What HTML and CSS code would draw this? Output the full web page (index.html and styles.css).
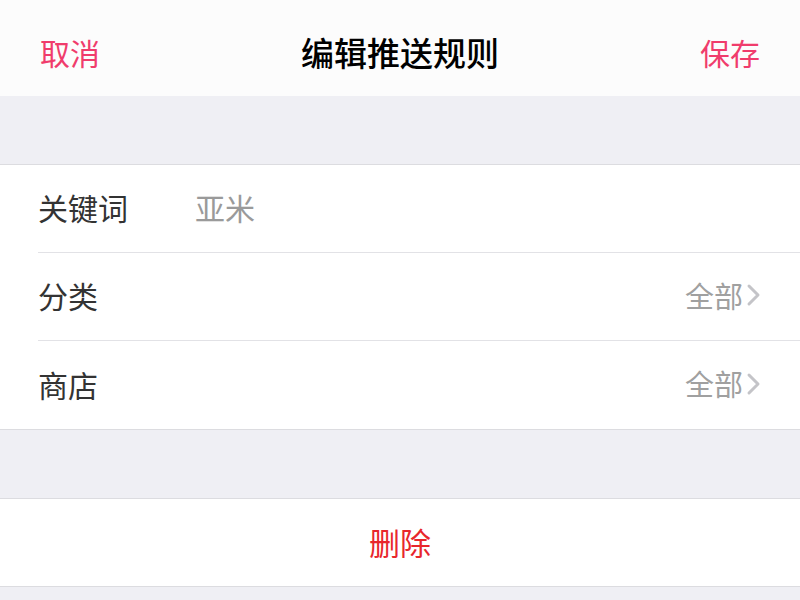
FILE: index.html
```html
<!DOCTYPE html>
<html>
<head>
  <meta charset="utf-8">
  <title>编辑推送规则</title>
  <link rel="stylesheet" href="styles.css">
</head>
<body>
  <div class="page">
    <div class="nav-bar">
      <span class="nav-btn">取消</span>
      <span class="nav-title">编辑推送规则</span>
      <span class="nav-btn">保存</span>
    </div>

    <div class="gap"></div>

    <div class="group">
      <div class="row">
        <span class="row-label">关键词</span>
        <span class="row-input">亚米</span>
      </div>
      <div class="row">
        <span class="row-label">分类</span>
        <span class="row-value">全部</span>
        <svg class="chevron" width="16" height="24" viewBox="0 0 16 24"><path d="M3 3 L12 12 L3 21" fill="none" stroke="#c4c4c8" stroke-width="3" stroke-linecap="round" stroke-linejoin="round"/></svg>
      </div>
      <div class="row">
        <span class="row-label">商店</span>
        <span class="row-value">全部</span>
        <svg class="chevron" width="16" height="24" viewBox="0 0 16 24"><path d="M3 3 L12 12 L3 21" fill="none" stroke="#c4c4c8" stroke-width="3" stroke-linecap="round" stroke-linejoin="round"/></svg>
      </div>
    </div>

    <div class="gap"></div>

    <div class="group">
      <div class="delete-row">删除</div>
    </div>
  </div>
</body>
</html>
```

FILE: styles.css
```css
body {
  margin: 0;
  padding: 0;
  font-family: "Noto Sans CJK SC", "Noto Sans", sans-serif;
  background-color: #efeff4;
}

.page {
  width: 800px;
  min-height: 600px;
}

.nav-bar {
  height: 96px;
  display: flex;
  align-items: center;
  justify-content: space-between;
  padding: 0 40px;
  background-color: #fcfcfc;
  box-sizing: border-box;
}

.nav-btn {
  font-size: 30px;
  color: #f03c6c;
  line-height: 1;
  padding-top: 8px;
}

.nav-title {
  font-size: 33px;
  font-weight: 500;
  color: #000;
  line-height: 1;
  padding-top: 8px;
}

.gap {
  height: 68px;
}

.group {
  background-color: #fff;
  border-top: 1px solid #dcdce0;
  border-bottom: 1px solid #dcdce0;
}

.row {
  height: 88px;
  box-sizing: border-box;
  margin-left: 38px;
  padding-right: 40px;
  padding-bottom: 3px;
  display: flex;
  align-items: center;
  border-bottom: 1px solid #e2e2e6;
}

.row:last-child {
  border-bottom: none;
}

.row-label {
  width: 157px;
  font-size: 30px;
  color: #333;
  line-height: 1;
}

.row-input {
  flex: 1;
  font-size: 30px;
  color: #9a9a9a;
  line-height: 1;
}

.row-value {
  margin-left: auto;
  font-size: 29px;
  color: #a0a0a0;
  line-height: 1;
}

.chevron {
  margin-left: 3px;
  margin-right: -2px;
}

.delete-row {
  height: 87px;
  padding-bottom: 3px;
  box-sizing: border-box;
  display: flex;
  align-items: center;
  justify-content: center;
  font-size: 31px;
  color: #e8262c;
}
```
